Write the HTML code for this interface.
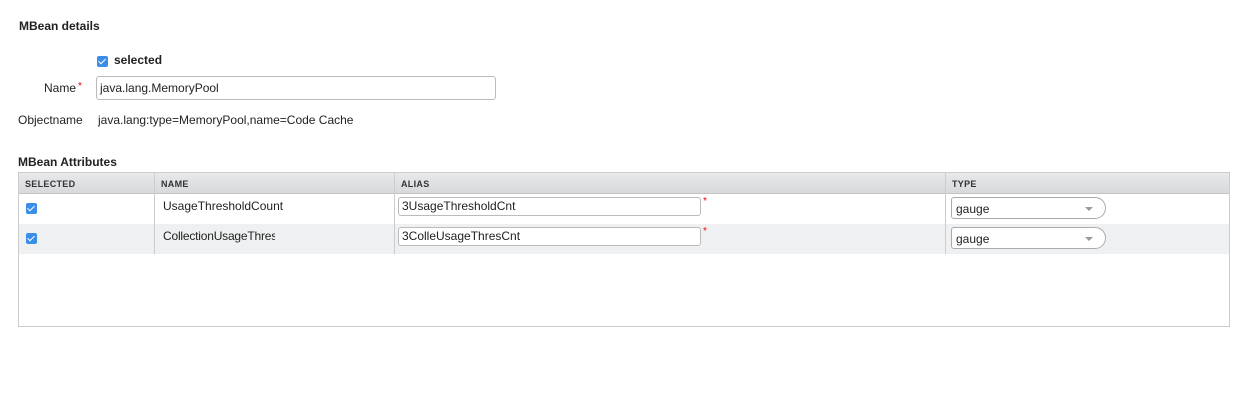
<!DOCTYPE html><html><head><style>
body{margin:0;width:1248px;height:407px;background:#fff;font-family:"Liberation Sans",sans-serif;font-size:12px;color:#222;position:relative;overflow:hidden}
.a{position:absolute}
.cb{position:absolute;width:11px;height:11px;border-radius:2px;background:#3b8ee8}
.cb:after{content:"";position:absolute;left:3px;top:1px;width:3px;height:6px;border:solid #fff;border-width:0 1.5px 1.5px 0;transform:rotate(45deg)}
.in{position:absolute;border:1px solid #bbb;border-radius:3px;background:#fff;box-sizing:border-box;padding-left:3px;font-size:12px;line-height:18px}
.th{position:absolute;top:172px;height:21px;line-height:24px;font-size:9px;font-weight:bold;letter-spacing:.3px;color:#333}
.sel{position:absolute;width:155px;height:22px;border:1px solid #aaa;border-radius:3px 11px 11px 3px;box-sizing:border-box;background:#fff;font-size:12px;line-height:22px;padding-left:4px}
.sel:after{content:"";position:absolute;right:12px;top:9px;border:4px solid transparent;border-top:4px solid #999}
.star{position:absolute;color:#e00;font-size:10px}
</style></head><body>
<div class="a" style="left:19px;top:19px;font-weight:bold;font-size:12px">MBean details</div>
<div class="cb" style="left:97px;top:56px"></div>
<div class="a" style="left:114px;top:53px;font-weight:bold">selected</div>
<div class="a" style="left:44px;top:81px">Name</div><div class="star" style="left:78px;top:81px">*</div>
<div class="in" style="left:96px;top:76px;width:400px;height:24px;line-height:22px">java.lang.MemoryPool</div>
<div class="a" style="left:18px;top:113px">Objectname</div>
<div class="a" style="left:98px;top:113px">java.lang:type=MemoryPool,name=Code Cache</div>
<div class="a" style="left:18px;top:155px;font-weight:bold">MBean Attributes</div>
<div class="a" style="left:18px;top:172px;width:1210px;height:153px;border:1px solid #ccc"></div>
<div class="a" style="left:19px;top:173px;width:1210px;height:20px;background:linear-gradient(#e8e9ea,#d8d9db);border-bottom:1px solid #c4c4c4"></div>
<div class="a" style="left:19px;top:224px;width:1210px;height:30px;background:#eff0f1"></div>
<div class="a" style="left:154px;top:173px;width:1px;height:81px;background:#ccc"></div>
<div class="a" style="left:394px;top:173px;width:1px;height:81px;background:#ccc"></div>
<div class="a" style="left:945px;top:173px;width:1px;height:81px;background:#ccc"></div>
<div class="th" style="left:25px">SELECTED</div>
<div class="th" style="left:161px">NAME</div>
<div class="th" style="left:401px">ALIAS</div>
<div class="th" style="left:952px">TYPE</div>
<div class="cb" style="left:26px;top:203px"></div>
<div class="cb" style="left:26px;top:233px"></div>
<div class="a" style="left:163px;top:199px">UsageThresholdCount</div>
<div class="a" style="left:163px;top:229px;width:112px;overflow:hidden;white-space:nowrap;letter-spacing:-0.2px">CollectionUsageThreshold</div>
<div class="in" style="left:398px;top:197px;width:303px;height:19px;line-height:17px">3UsageThresholdCnt</div>
<div class="star" style="left:703px;top:196px">*</div>
<div class="in" style="left:398px;top:227px;width:303px;height:19px;line-height:17px">3ColleUsageThresCnt</div>
<div class="star" style="left:703px;top:226px">*</div>
<div class="sel" style="left:951px;top:197px">gauge</div>
<div class="sel" style="left:951px;top:227px">gauge</div>
</body></html>
